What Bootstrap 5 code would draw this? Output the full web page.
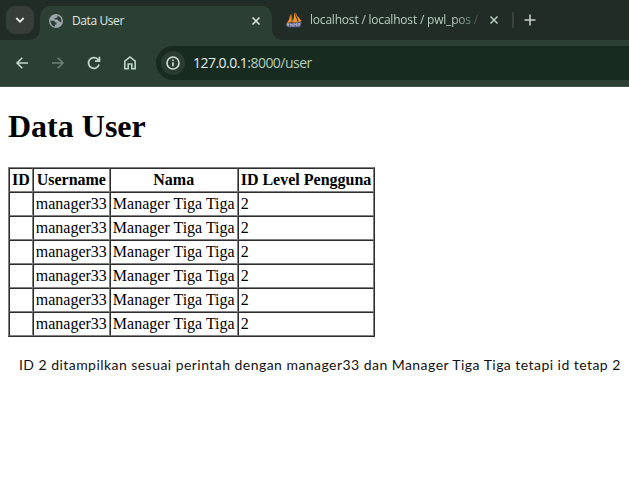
<!DOCTYPE html>
<html lang="id">
<head>
<meta charset="utf-8">
<title>Data User</title>
<link href="https://cdn.jsdelivr.net/npm/bootstrap@5.3.0/dist/css/bootstrap.min.css" rel="stylesheet">
<style>
body{font-family:"Open Sans","Noto Sans",sans-serif;background:#fff;overflow:hidden}
.tabstrip{height:40px;background:#202c25}
.tab-search{width:28px;height:28px;margin:6px 0 0 6px;border-radius:9px;background:#373d39}
.active-tab{width:232px;height:34px;margin:6px 0 0 6px;border-radius:10px 10px 0 0;background:#2c3f33;position:relative;padding:0 9px 5px}
.active-tab::before,.active-tab::after{content:"";position:absolute;bottom:0;width:10px;height:10px}
.active-tab::before{left:-10px;background:radial-gradient(circle at 0 0,transparent 9.5px,#2c3f33 10px)}
.active-tab::after{right:-10px;background:radial-gradient(circle at 100% 0,transparent 9.5px,#2c3f33 10px)}
.tab-title{font-size:12px;line-height:16px;color:#e0e8e2;letter-spacing:-.25px}
.tab-name{margin-left:9px;letter-spacing:-.4px}
.other-tab{height:40px;padding-left:14px;width:240px}
.other-tab .tab-title{width:169px;color:#b9d0c0;letter-spacing:-.2px;-webkit-mask-image:linear-gradient(90deg,#000 143px,transparent 176px);mask-image:linear-gradient(90deg,#000 143px,transparent 176px)}
.divider{width:2px;height:16px;background:#39423c}
.toolbar{height:47px;background:#2c3f33;border-bottom:1px solid #47534b;padding-left:14px}
.toolbar svg{flex:none}
.nav-icons{gap:20px;width:142px}
.omnibox{height:34px;background:#182b20;border-radius:17px 0 0 17px;padding-left:5px}
.info-chip{width:24px;height:24px;background:#2a3b31}
.url{font-size:14px;line-height:20px;color:#b5cdbc;margin-left:8px;letter-spacing:-.53px}
.url span{color:#e3ebe5}
.page-title{font:bold 32px/37px "Liberation Serif",serif;color:#000;margin:0 0 22px}
.page-body{padding:21px 8px 0}
.user-table{font:16px/18px "Liberation Serif",serif;color:#000;border-collapse:separate;border-spacing:0;border:1px solid;border-color:#808080 #2c2c2c #2c2c2c #808080}
.user-table th,.user-table td{padding:2px;border:1px solid;border-color:#2c2c2c #808080 #808080 #2c2c2c;height:24px}
.user-table th{text-align:center}
.note{font:14px/20px Lato,sans-serif;color:#111;margin:18px 0 0 11px;letter-spacing:.455px}
</style>
<script src="https://cdn.jsdelivr.net/npm/bootstrap@5.3.0/dist/js/bootstrap.bundle.min.js"></script>
</head>
<body>
<header>
<div class="tabstrip d-flex">
  <div class="tab-search d-flex align-items-center justify-content-center"><svg width="12" height="12" fill="none" stroke="#e0e8e2" stroke-width="1.8"><path d="M2.3 4 6 7.7 9.7 4"/></svg></div>
  <div class="active-tab d-flex align-items-center">
    <svg width="14" height="14" viewBox="0 0 14 14"><circle cx="7" cy="7" r="7" fill="#9ea5ad"/><path d="M1.3 6.8h3.2q1.8.2 1.7 1.8h1.3v1.8H6v2.4Q1.7 11.8 1.3 6.8M8.4 1.5v1.2q-.2 1.2-1.6 1.2H5.6v1.5h2.7q1.5.2 1.5 2.1h1.1q1 .1 1.2 1.4Q13.7 3.6 8.4 1.5" fill="#2c3f33"/></svg>
    <span class="tab-title tab-name me-auto text-nowrap">Data User</span>
    <svg width="14" height="14" fill="none" stroke="#e0e8e2" stroke-width="1.5"><path d="m3.5 3.5 7 7m0-7-7 7"/></svg>
  </div>
  <div class="other-tab d-flex align-items-center">
    <svg width="16" height="16" viewBox="0 0 16 16"><path d="M1 11Q4 7 4.2 2l1.7 8zM6 10.5Q8.7 6 8 0l4 10.5zM11.3 3.5 15.5 9l-3 1.5z" fill="#f49322"/><path d="M5 2.5 6.5 10M9.5 1l3.5 8.5" stroke="#b8793a"/><path d="M0 11.2 15.8 10 14 15.2H1.5z" fill="#62658e"/><path d="M1 13.8v-2h2v1.2H1m3.8 1.5v-3m0 1.2h2v2M8 14.3v-3l1.3 1.6 1.3-1.6v3m1.5-.2v-2.6h1.6v1.7h-1.6" fill="none" stroke="#c2c3d7" stroke-width=".7"/></svg>
    <span class="tab-title ms-2 text-nowrap">localhost / localhost / pwl_pos /</span>
    <svg class="ms-2" width="14" height="14" fill="none" stroke="#b9d0c0" stroke-width="1.5"><path d="m3.5 3.5 7 7m0-7-7 7"/></svg>
  </div>
  <div class="d-flex align-items-center gap-2"><div class="divider"></div><svg width="16" height="14" fill="none" stroke="#c6cec8" stroke-width="1.6"><path d="M8 1.5v11M2.5 7h11"/></svg></div>
</div>
<div class="toolbar d-flex align-items-center">
  <div class="nav-icons d-flex flex-shrink-0">
    <svg width="16" height="16" fill="none" stroke="#bed7c6" stroke-width="1.6"><path d="M14 8H3m5.3-5.3L3 8l5.3 5.3"/></svg>
    <svg width="16" height="16" fill="none" stroke="#6c7f73" stroke-width="1.6"><path d="M2 8h11M7.7 2.7 13 8l-5.3 5.3"/></svg>
    <svg width="16" height="16" fill="none" stroke="#bed7c6" stroke-width="1.7"><path d="M13.1 9.5A5.4 5.4 0 1 1 11.8 4.2L13 5.5M13.5 1.8v4.4H9"/></svg>
    <svg width="16" height="16" fill="none" stroke="#bed7c6" stroke-width="1.6"><path d="M2.8 6.2 8 2l5.2 4.2v7.5H9.8V9H6.2v4.7H2.8z"/></svg>
  </div>
  <div class="omnibox flex-grow-1 d-flex align-items-center">
    <div class="info-chip rounded-circle d-flex align-items-center justify-content-center"><svg width="14" height="14" fill="none" stroke="#d5e0d8" stroke-width="1.6"><circle cx="7" cy="7" r="6"/><path d="M7 6.2v4M7 3.5v1.6"/></svg></div>
    <div class="url"><span>127.0.0.1</span>:8000/user</div>
  </div>
</div>
</header>
<main class="page-body">
<h1 class="page-title">Data User</h1>
<table class="user-table">
<thead><tr><th>ID</th><th>Username</th><th>Nama</th><th>ID Level Pengguna</th></tr></thead>
<tbody>
<tr><td></td><td>manager33</td><td>Manager Tiga Tiga</td><td>2</td></tr>
<tr><td></td><td>manager33</td><td>Manager Tiga Tiga</td><td>2</td></tr>
<tr><td></td><td>manager33</td><td>Manager Tiga Tiga</td><td>2</td></tr>
<tr><td></td><td>manager33</td><td>Manager Tiga Tiga</td><td>2</td></tr>
<tr><td></td><td>manager33</td><td>Manager Tiga Tiga</td><td>2</td></tr>
<tr><td></td><td>manager33</td><td>Manager Tiga Tiga</td><td>2</td></tr>
</tbody>
</table>
<p class="note text-nowrap">ID 2 ditampilkan sesuai perintah dengan manager33 dan Manager Tiga Tiga tetapi id tetap 2</p>
</main>
</body>
</html>
